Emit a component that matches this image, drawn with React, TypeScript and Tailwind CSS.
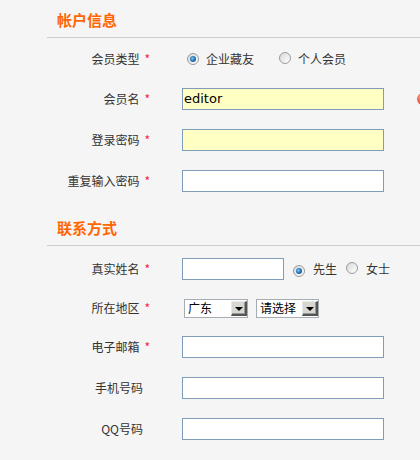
import React from "react";

const cjk = { fontFamily: '"Noto Sans CJK SC", "Noto Sans", sans-serif' };

function Radio({ checked }: { checked?: boolean }) {
  return (
    <span className="relative inline-flex h-[12px] w-[12px] shrink-0 items-center justify-center rounded-full border border-[#9a9a9a] bg-[linear-gradient(135deg,#d8d8d8,#ffffff)]">
      {checked && (
        <span className="h-[6px] w-[6px] rounded-full bg-[radial-gradient(circle_at_40%_40%,#7fc3ef,#1a6db0_55%,#0b3d6e)]" />
      )}
    </span>
  );
}

function Label({ text, star }: { text: string; star?: boolean }) {
  return (
    <div className="w-[150px] shrink-0 text-right text-[12px] text-[#333]" style={cjk}>
      {star ? (
        <>
          {text}
          <span className="ml-[5px] text-[#ff1a4a]">*</span>
        </>
      ) : (
        <span className="pr-[7px]">{text}</span>
      )}
    </div>
  );
}

function Input({ value, yellow, w = "w-[202px]" }: { value?: string; yellow?: boolean; w?: string }) {
  return (
    <div
      className={`${w} flex h-[22px] shrink-0 items-center border border-[#7f9db9] px-[1px] text-[13px] text-black ${yellow ? "bg-[#ffffc4]" : "bg-white"}`}
      style={{ fontFamily: '"DejaVu Sans", sans-serif' }}
    >
      {value}
    </div>
  );
}

function Select({ text, w }: { text: string; w: string }) {
  return (
    <div className={`${w} flex h-[19px] shrink-0 items-center justify-between border border-[#a5acb2] bg-white pl-[3px]`}>
      <span className="text-[12px] leading-none text-black" style={cjk}>{text}</span>
      <span className="flex h-[15px] w-[16px] items-center justify-center border-t border-l border-t-[#e8e8e8] border-l-[#e8e8e8] border-r-[2px] border-b-[2px] border-r-[#555] border-b-[#555] bg-[#d8d6d0] shadow-[inset_-1px_-1px_0_#999]">
        <span className="mt-[2px] h-0 w-0 border-x-[4px] border-t-[4px] border-x-transparent border-t-black" />
      </span>
    </div>
  );
}

function Heading({ text, extra }: { text: string; extra?: string }) {
  return (
    <div className={extra}>
      <div className="flex h-[37px] items-end pb-[10px] pl-[57px]">
        <span className="text-[15px] font-bold leading-[15px] text-[#ff6600]" style={cjk}>
          {text}
        </span>
      </div>
      <div className="ml-[47px] h-px bg-[#cccccc]" />
    </div>
  );
}

export default function App() {
  return (
    <div className="relative h-[460px] w-[420px] overflow-hidden bg-[#f5f5f5]">
      <Heading text="帐户信息" />
      <div className="flex h-[41px] items-center">
        <Label text="会员类型" star />
        <div className="ml-[37px] flex items-center text-[12px] text-[#333]" style={cjk}>
          <Radio checked />
          <span className="ml-[7px]">企业藏友</span>
          <span className="ml-[25px]"><Radio /></span>
          <span className="ml-[7px]">个人会员</span>
        </div>
      </div>
      <div className="flex h-[40px] items-center">
        <Label text="会员名" star />
        <div className="ml-[32px]"><Input value="editor" yellow /></div>
        <span className="ml-[33px] h-[12px] w-[12px] shrink-0 rounded-full bg-[radial-gradient(circle_at_40%_35%,#ffb39a,#e5492a_60%,#b5281a)]" />
      </div>
      <div className="flex h-[41px] items-center">
        <Label text="登录密码" star />
        <div className="ml-[32px]"><Input yellow /></div>
      </div>
      <div className="flex h-[41px] items-center">
        <Label text="重复输入密码" star />
        <div className="ml-[32px]"><Input /></div>
      </div>

      <Heading text="联系方式" extra="mt-[7px]" />
      <div className="flex h-[45px] items-center">
        <Label text="真实姓名" star />
        <div className="ml-[32px] flex items-center text-[12px] text-[#333]" style={cjk}>
          <Input w="w-[102px]" />
          <span className="ml-[9px]"><Radio checked /></span>
          <span className="ml-[8px]">先生</span>
          <span className="ml-[9px]"><Radio /></span>
          <span className="ml-[8px]">女士</span>
        </div>
      </div>
      <div className="flex h-[34px] items-center">
        <Label text="所在地区" star />
        <div className="ml-[34px] flex items-center gap-[8px]">
          <Select text="广东" w="w-[64px]" />
          <Select text="请选择" w="w-[63px]" />
        </div>
      </div>
      <div className="flex h-[43px] items-center">
        <Label text="电子邮箱" star />
        <div className="ml-[32px]"><Input /></div>
      </div>
      <div className="flex h-[39px] items-center">
        <Label text="手机号码" />
        <div className="ml-[32px]"><Input /></div>
      </div>
      <div className="flex h-[43px] items-center">
        <Label text="QQ号码" />
        <div className="ml-[32px]"><Input /></div>
      </div>
    </div>
  );
}
